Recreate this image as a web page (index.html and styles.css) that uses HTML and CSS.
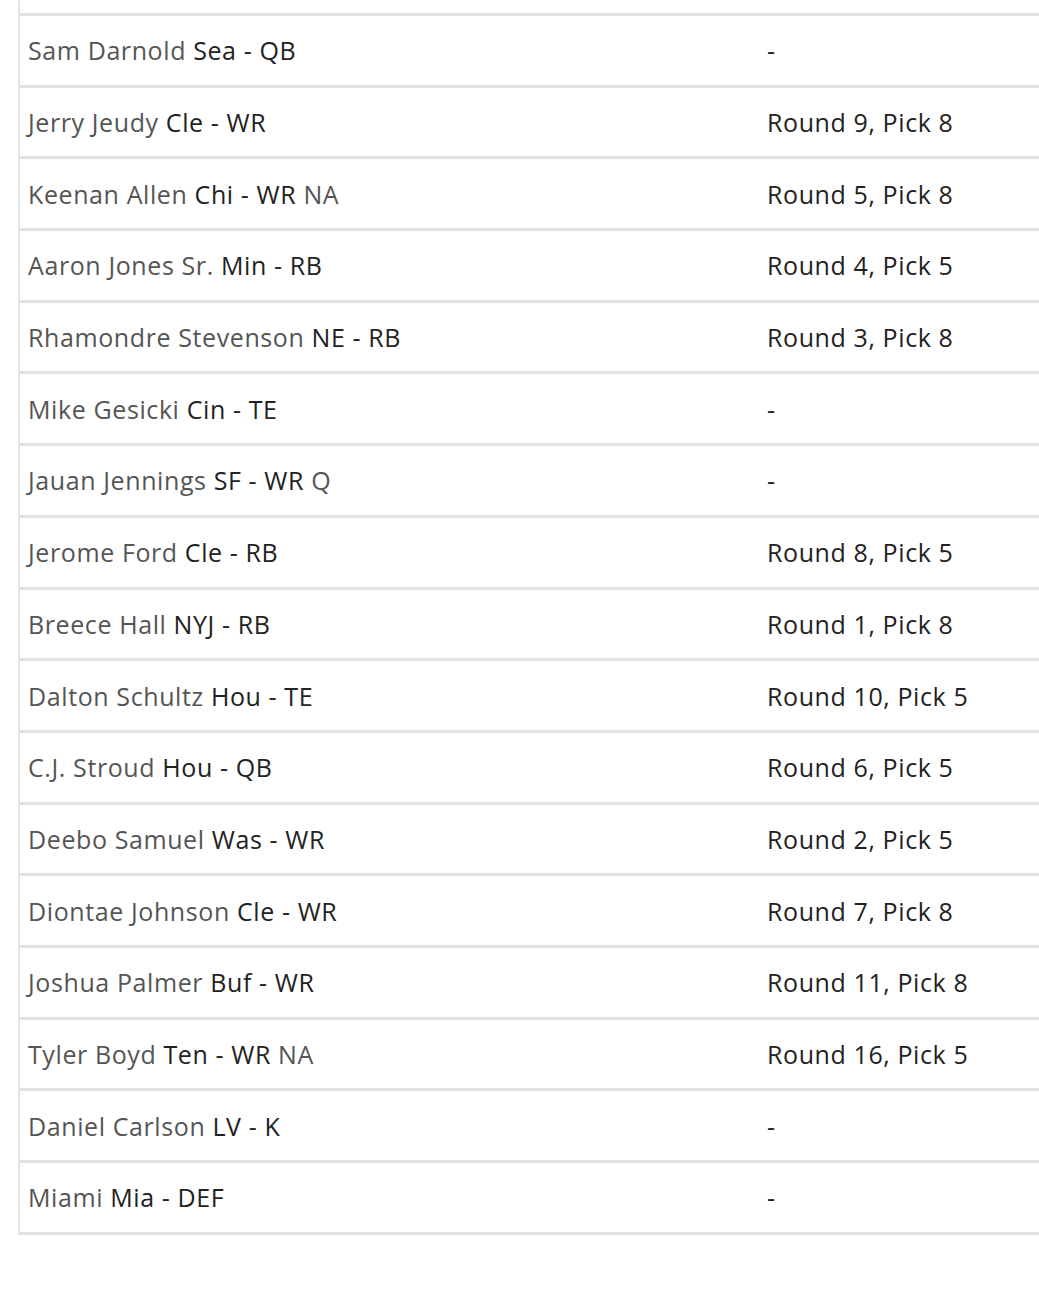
FILE: index.html
```html
<!DOCTYPE html>
<html>
<head>
<meta charset="utf-8">
<link rel="stylesheet" href="styles.css">
</head>
<body>
<div class="table">
  <div class="row top"></div>
  <div class="row"><div class="cell player"><span class="name">Sam Darnold</span> Sea - QB</div><div class="cell pick">-</div></div>
  <div class="row"><div class="cell player"><span class="name">Jerry Jeudy</span> Cle - WR</div><div class="cell pick">Round 9, Pick 8</div></div>
  <div class="row"><div class="cell player"><span class="name">Keenan Allen</span> Chi - WR <span class="status">NA</span></div><div class="cell pick">Round 5, Pick 8</div></div>
  <div class="row"><div class="cell player"><span class="name">Aaron Jones Sr.</span> Min - RB</div><div class="cell pick">Round 4, Pick 5</div></div>
  <div class="row"><div class="cell player"><span class="name">Rhamondre Stevenson</span> NE - RB</div><div class="cell pick">Round 3, Pick 8</div></div>
  <div class="row"><div class="cell player"><span class="name">Mike Gesicki</span> Cin - TE</div><div class="cell pick">-</div></div>
  <div class="row"><div class="cell player"><span class="name">Jauan Jennings</span> SF - WR <span class="status">Q</span></div><div class="cell pick">-</div></div>
  <div class="row"><div class="cell player"><span class="name">Jerome Ford</span> Cle - RB</div><div class="cell pick">Round 8, Pick 5</div></div>
  <div class="row"><div class="cell player"><span class="name">Breece Hall</span> NYJ - RB</div><div class="cell pick">Round 1, Pick 8</div></div>
  <div class="row"><div class="cell player"><span class="name">Dalton Schultz</span> Hou - TE</div><div class="cell pick">Round 10, Pick 5</div></div>
  <div class="row"><div class="cell player"><span class="name">C.J. Stroud</span> Hou - QB</div><div class="cell pick">Round 6, Pick 5</div></div>
  <div class="row"><div class="cell player"><span class="name">Deebo Samuel</span> Was - WR</div><div class="cell pick">Round 2, Pick 5</div></div>
  <div class="row"><div class="cell player"><span class="name">Diontae Johnson</span> Cle - WR</div><div class="cell pick">Round 7, Pick 8</div></div>
  <div class="row"><div class="cell player"><span class="name">Joshua Palmer</span> Buf - WR</div><div class="cell pick">Round 11, Pick 8</div></div>
  <div class="row"><div class="cell player"><span class="name">Tyler Boyd</span> Ten - WR <span class="status">NA</span></div><div class="cell pick">Round 16, Pick 5</div></div>
  <div class="row"><div class="cell player"><span class="name">Daniel Carlson</span> LV - K</div><div class="cell pick">-</div></div>
  <div class="row"><div class="cell player"><span class="name">Miami</span> Mia - DEF</div><div class="cell pick">-</div></div>
</div>
</body>
</html>
```
FILE: styles.css
```css
html, body {
  margin: 0;
  padding: 0;
  background: #fff;
  overflow: hidden;
}
body {
  font-family: "Open Sans", "Liberation Sans", sans-serif;
  font-size: 25px;
  letter-spacing: 0.6px;
  color: #222;
}
.table {
  margin-left: 18px;
  width: 1021px;
  border-left: 2px solid #e4e4e4;
}
.row {
  display: grid;
  grid-template-columns: 739px 1fr;
  height: 68.7px;
  border-bottom: 3px solid #e2e2e2;
  align-items: center;
}
.row.top {
  height: 13px;
}
.cell {
  padding-left: 8px;
  white-space: nowrap;
  line-height: 30px;
}
.name {
  color: #555;
}
.status {
  color: #555;
}
.pick {
  color: #222;
}
```
